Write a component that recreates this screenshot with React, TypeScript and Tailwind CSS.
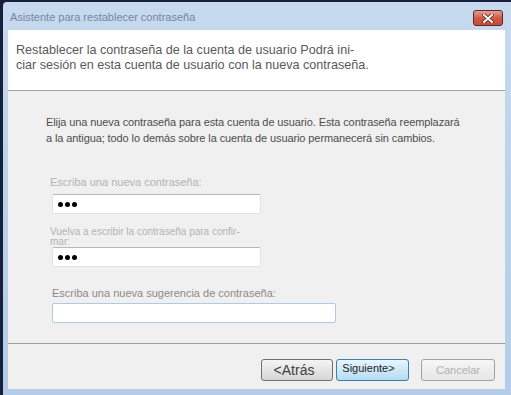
import React from 'react'

const font = { fontFamily: '"Liberation Sans", Arial, sans-serif' }

function Dots() {
  return (
    <div className="flex items-center gap-[2px] pl-[5px] h-full">
      <span className="w-[5px] h-[5px] rounded-full bg-black" />
      <span className="w-[5px] h-[5px] rounded-full bg-black" />
      <span className="w-[5px] h-[5px] rounded-full bg-black" />
    </div>
  )
}

function Field({ w, focus, children }: { w: string; focus?: boolean; children?: React.ReactNode }) {
  return (
    <div
      className={
        'h-[20px] bg-white border rounded-[2px] ' +
        (focus ? 'border-[#b2c9df] ' : 'border-[#dfe3e8] border-t-[#b5b8bd] ') +
        w
      }
    >
      {children}
    </div>
  )
}

export default function App() {
  return (
    <div className="w-[511px] h-[395px] bg-[#16203a] pl-[3px] pt-[2px] overflow-hidden" style={font}>
      <div className="h-full flex flex-col bg-gradient-to-b from-[#c7d9ee] via-[#bcd2ea] to-[#b4cce8] rounded-tl-[4px] pl-[5px] pr-[6px] pb-[6px]">
        {/* title bar */}
        <div className="h-[28px] flex items-center justify-between">
          <div className="text-[11px] text-[#7487a0] pl-[2px] pt-[2px]">Asistente para restablecer contraseña</div>
          <div className="w-[30px] h-[16px] mr-[2px] mt-[4px] rounded-[3px] border border-[#5a2a28] bg-gradient-to-b from-[#e8a08f] via-[#cf5b45] to-[#c74a35] flex items-center justify-center">
            <svg width="12" height="9" viewBox="0 0 12 9">
              <path d="M2 1 L10 8 M10 1 L2 8" stroke="#3a1a18" strokeWidth="3.2" strokeLinecap="round" />
              <path d="M2 1 L10 8 M10 1 L2 8" stroke="#ffffff" strokeWidth="2" strokeLinecap="round" />
            </svg>
          </div>
        </div>

        {/* header */}
        <div className="h-[60px] bg-white pl-[8px] pt-[13px]">
          <div className="text-[12.6px] leading-[15px] text-[#595959]">
            Restablecer la contraseña de la cuenta de usuario Podrá ini-
            <br />
            ciar sesión en esta cuenta de usuario con la nueva contraseña.
          </div>
        </div>
        <div className="h-px bg-[#a3a3a3]" />

        {/* body */}
        <div className="flex-1 flex flex-col bg-[#f0f0f0]">
          <div className="flex-1 pl-[38px] pt-[23px] flex flex-col">
            <div className="text-[11px] leading-[16px] text-[#4d4d4d] tracking-[-0.1px]">
              Elija una nueva contraseña para esta cuenta de usuario. Esta contraseña reemplazará
              <br />
              a la antigua; todo lo demás sobre la cuenta de usuario permanecerá sin cambios.
            </div>
            <div className="mt-[30px] ml-[4px] text-[11px] leading-[13px] text-[#b3b3b3]">Escriba una nueva contraseña:</div>
            <div className="mt-[5px] ml-[6px]">
              <Field w="w-[209px]">
                <Dots />
              </Field>
            </div>
            <div className="mt-[13px] ml-[4px] text-[10px] leading-[10px] text-[#b3b3b3]">
              Vuelva a escribir la contraseña para confir-
              <br />
              mar:
            </div>
            <div className="ml-[6px]">
              <Field w="w-[209px]">
                <Dots />
              </Field>
            </div>
            <div className="mt-[19px] ml-[6px] text-[11px] leading-[14px] text-[#8a8a8a]">Escriba una nueva sugerencia de contraseña:</div>
            <div className="mt-[3px] ml-[6px]">
              <Field w="w-[284px]" focus />
            </div>
          </div>
          <div className="h-px bg-[#a0a0a0] mb-[15px]" />
          <div className="h-[22px] mb-[8px] flex justify-end pr-[10px]">
            <button className="w-[72px] h-[22px] rounded-[3px] border border-[#707070] bg-gradient-to-b from-[#f4f4f4] to-[#d6d6d6] text-[14px] leading-[20px] text-[#404040] pr-[6px]">
              &lt;Atrás
            </button>
            <button className="ml-[3px] w-[73px] h-[22px] rounded-[3px] border border-[#3c7fb1] bg-gradient-to-b from-[#e8f5fd] to-[#b4dcf3] text-[11px] leading-[14px] text-[#222] pr-[8px] self-start pt-[1px] flex justify-center">
              Siguiente&gt;
            </button>
            <button className="ml-[12px] w-[74px] h-[22px] rounded-[3px] border border-[#9ea3a6] bg-gradient-to-b from-[#f6f6f6] to-[#e6e6e6] text-[11px] text-[#b0b0b0]">
              Cancelar
            </button>
          </div>
        </div>
      </div>
    </div>
  )
}
